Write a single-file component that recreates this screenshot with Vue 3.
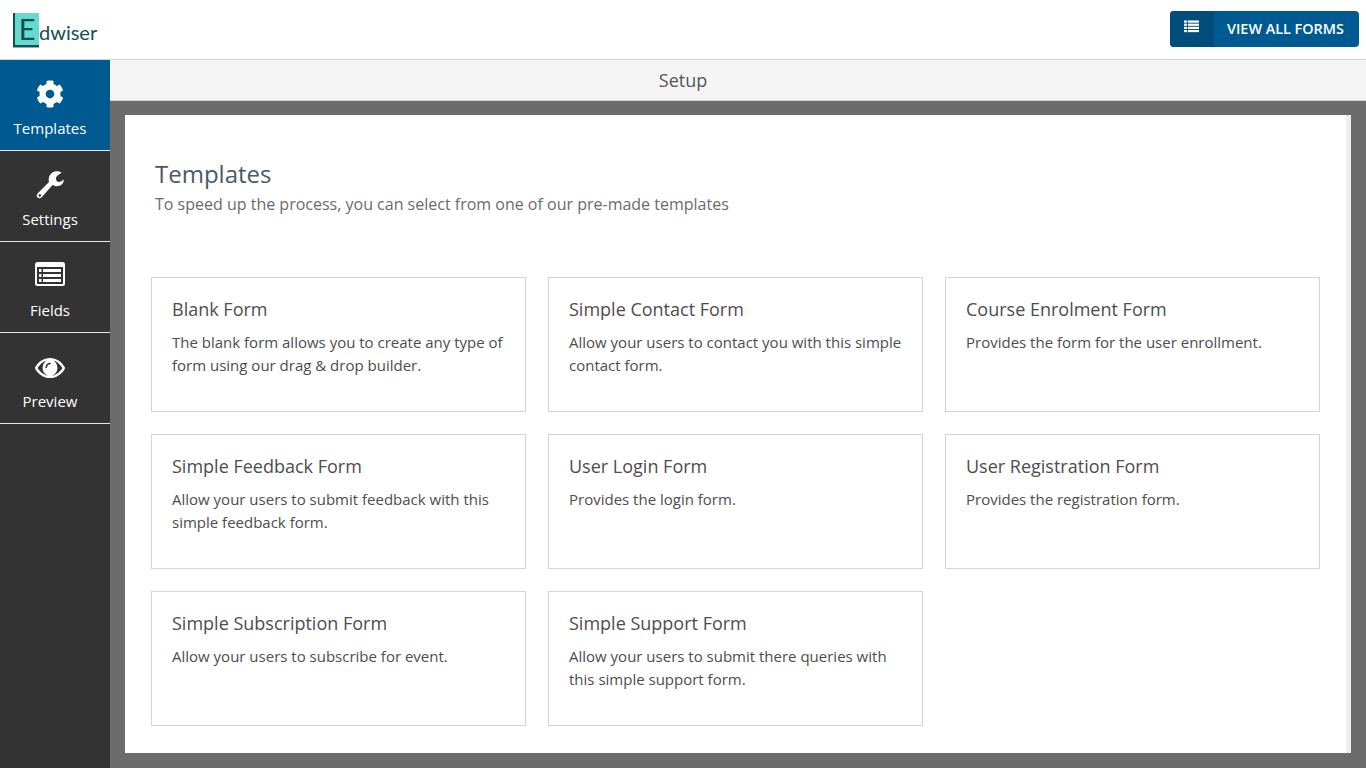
<script setup>
const navItems = [
  { label: 'Templates', icon: 'gear', active: true },
  { label: 'Settings', icon: 'wrench' },
  { label: 'Fields', icon: 'fields' },
  { label: 'Preview', icon: 'eye' },
]

const templates = [
  { title: 'Blank Form', text: 'The blank form allows you to create any type of form using our drag & drop builder.' },
  { title: 'Simple Contact Form', text: 'Allow your users to contact you with this simple contact form.' },
  { title: 'Course Enrolment Form', text: 'Provides the form for the user enrollment.' },
  { title: 'Simple Feedback Form', text: 'Allow your users to submit feedback with this simple feedback form.' },
  { title: 'User Login Form', text: 'Provides the login form.' },
  { title: 'User Registration Form', text: 'Provides the registration form.' },
  { title: 'Simple Subscription Form', text: 'Allow your users to subscribe for event.' },
  { title: 'Simple Support Form', text: 'Allow your users to submit there queries with this simple support form.' },
]
</script>

<template>
  <div class="page">
    <header class="topbar">
      <div class="logo">
        <span class="logo-book"><span class="logo-e">E</span></span>
        <span class="logo-text">dwiser</span>
      </div>
      <button class="all-forms">
        <span class="all-forms-icon">
          <svg viewBox="0 0 16 14" width="15" height="13" fill="#fff">
            <rect x="0" y="0.5" width="3" height="2.4" />
            <rect x="4" y="0.5" width="12" height="2.4" />
            <rect x="0" y="3.9" width="3" height="2.4" />
            <rect x="4" y="3.9" width="12" height="2.4" />
            <rect x="0" y="7.3" width="3" height="2.4" />
            <rect x="4" y="7.3" width="12" height="2.4" />
            <rect x="0" y="10.7" width="3" height="2.4" />
            <rect x="4" y="10.7" width="12" height="2.4" />
          </svg>
        </span>
        <span class="all-forms-label">VIEW ALL FORMS</span>
      </button>
    </header>

    <div class="body">
      <nav class="sidebar">
        <a v-for="item in navItems" :key="item.label" class="nav-item" :class="{ active: item.active }">
          <svg v-if="item.icon === 'gear'" class="nav-icon" viewBox="0 0 512 512" width="28" height="28" fill="#fff">
            <path d="M487.4 315.7l-42.6-24.6c4.3-23.2 4.3-47 0-70.2l42.6-24.6c4.9-2.8 7.1-8.6 5.5-14-11.1-35.6-30-67.8-54.7-94.6-3.8-4.1-10-5.1-14.8-2.3L380.8 110c-17.9-15.4-38.5-27.3-60.8-35.1V25.8c0-5.6-3.9-10.5-9.4-11.7-36.7-8.2-74.3-7.8-109.2 0-5.5 1.2-9.4 6.1-9.4 11.7V75c-22.2 7.9-42.8 19.8-60.8 35.1L88.7 85.5c-4.9-2.8-11-1.9-14.8 2.3-24.7 26.7-43.6 58.9-54.7 94.6-1.7 5.4.6 11.2 5.5 14L67.3 221c-4.3 23.2-4.3 47 0 70.2l-42.6 24.6c-4.9 2.8-7.1 8.6-5.5 14 11.1 35.6 30 67.8 54.7 94.6 3.8 4.1 10 5.1 14.8 2.3l42.6-24.6c17.9 15.4 38.5 27.3 60.8 35.1v49.2c0 5.6 3.9 10.5 9.4 11.7 36.7 8.2 74.3 7.8 109.2 0 5.5-1.2 9.4-6.1 9.4-11.7v-49.2c22.2-7.9 42.8-19.8 60.8-35.1l42.6 24.6c4.9 2.8 11 1.9 14.8-2.3 24.7-26.7 43.6-58.9 54.7-94.6 1.5-5.5-.7-11.3-5.6-14.1zM256 336c-44.1 0-80-35.9-80-80s35.9-80 80-80 80 35.9 80 80-35.9 80-80 80z" />
          </svg>
          <svg v-else-if="item.icon === 'wrench'" class="nav-icon" viewBox="0 0 28 28" width="28" height="28">
            <path fill="#fff" fill-rule="evenodd" d="M25.500 1.800L21.500 4.500Q19.500 6 20 8.500Q20.500 11 23 11Q24.500 11 27.800 8.500C28 13 24 15.500 20 15.200L16.500 14L5.500 26.500Q3.500 28 1.500 26.500Q0 24.500 1.500 22.500L13 11C11.500 6 15 .5 20.500 .3C22.500 .2 24 .7 25.500 1.800zM3.800 23.200a1.300 1.300 0 1 0 0 2.600 1.300 1.300 0 0 0 0-2.600z" />
          </svg>
          <svg v-else-if="item.icon === 'fields'" class="nav-icon" viewBox="0 0 30 24" width="30" height="24">
            <rect x="0" y="0" width="30" height="24" rx="2.500" fill="#fff" />
            <rect x="2" y="5" width="26" height="17" fill="#333" />
            <g fill="#fff">
              <rect x="4" y="7" width="2.500" height="3" />
              <rect x="8" y="7" width="18" height="3" />
              <rect x="4" y="12" width="2.500" height="3" />
              <rect x="8" y="12" width="18" height="3" />
              <rect x="4" y="17" width="2.500" height="3" />
              <rect x="8" y="17" width="18" height="3" />
            </g>
          </svg>
          <svg v-else class="nav-icon nav-icon-eye" viewBox="0 0 30 20" width="30" height="20">
            <path fill="#fff" fill-rule="evenodd" d="M15 0C8.800 0 3.400 3.600.3 9.100c-.4.600-.4 1.200 0 1.800C3.400 16.400 8.800 20 15 20s11.600-3.600 14.700-9.100c.4-.6.4-1.200 0-1.800C26.600 3.600 21.200 0 15 0zM2.600 10C4.800 6.400 8 3.700 11.800 2.600 9.200 4 7.600 6.800 7.600 10c0 4.100 3.300 7.800 7.400 7.800s7.400-3.700 7.400-7.800c0-3.200-1.600-6-4.200-7.400 3.800 1.100 7 3.800 9.200 7.400-2.800 4.500-7.200 7.800-12.400 7.800S5.400 14.500 2.600 10z" />
            <circle cx="15" cy="10" r="7" fill="#fff" />
            <path fill="#333" d="M10.500 9.500c0-2.700 2-4.800 4.600-4.800.5 0 .8.300.8.800s-.3.800-.8.800c-1.700 0-3 1.400-3 3.200 0 .5-.3.800-.8.800s-.8-.3-.8-.8z" />
          </svg>
          <span class="nav-label">{{ item.label }}</span>
        </a>
      </nav>

      <main class="main">
        <div class="subbar">Setup</div>
        <div class="content">
          <section class="panel">
            <div class="intro">
              <h2>Templates</h2>
              <p>To speed up the process, you can select from one of our pre-made templates</p>
            </div>
            <div class="grid">
              <div v-for="tpl in templates" :key="tpl.title" class="card">
                <h3>{{ tpl.title }}</h3>
                <p>{{ tpl.text }}</p>
              </div>
            </div>
          </section>
        </div>
      </main>
    </div>
  </div>
</template>

<style>
html, body {
  margin: 0;
  height: 100%;
  overflow: hidden;
}
</style>

<style scoped>
.page {
  width: 1366px;
  height: 768px;
  display: flex;
  flex-direction: column;
  font-family: "Open Sans", sans-serif;
  overflow: hidden;
}

.topbar {
  height: 59px;
  flex: none;
  background: #fff;
  border-bottom: 1px solid #d4d4d4;
  display: flex;
  align-items: flex-start;
  justify-content: space-between;
  padding: 0 7px 0 13px;
}

.logo {
  display: flex;
  align-items: flex-start;
  margin-top: 13px;
}

.logo-book {
  width: 24px;
  height: 32px;
  background: #66d9d0;
  border-left: 2px solid #12504f;
  border-bottom: 2px solid #12504f;
  box-shadow: 0 1px 0 #8fb5b3;
  display: flex;
  align-items: center;
  justify-content: center;
}

.logo-e {
  font-family: Lato, sans-serif;
  font-size: 29px;
  line-height: 32px;
  color: #12504f;
}

.logo-text {
  font-family: Lato, sans-serif;
  font-size: 20px;
  line-height: 26px;
  color: #12504f;
  margin-top: 6px;
}

.all-forms {
  margin-top: 11px;
  width: 189px;
  height: 36px;
  padding: 0;
  border: none;
  border-radius: 4px;
  overflow: hidden;
  background: #005a92;
  display: flex;
  font-family: inherit;
}

.all-forms-icon {
  width: 44px;
  height: 100%;
  background: #004c7a;
  display: flex;
  justify-content: center;
  padding-top: 9px;
  box-sizing: border-box;
  padding-right: 2px;
}

.all-forms-label {
  flex: 1;
  line-height: 36px;
  text-align: left;
  padding-left: 13px;
  color: #fff;
  font-size: 14.4px;
  font-weight: 600;
}

.body {
  flex: 1;
  display: flex;
  min-height: 0;
}

.sidebar {
  width: 110px;
  flex: none;
  background: #333;
}

.nav-item {
  height: 90px;
  border-bottom: 1px solid #e6e6e6;
  box-sizing: content-box;
  padding-right: 10px;
  width: 100px;
  display: flex;
  flex-direction: column;
  align-items: center;
  color: #fff;
  position: relative;
}

.nav-item.active {
  background: #005a92;
}

.nav-icon {
  position: absolute;
  top: 20px;
}

.nav-icon-eye {
  top: 25px;
}

.nav-label {
  margin-top: 57px;
  font-size: 15px;
  line-height: 22px;
}

.main {
  flex: 1;
  display: flex;
  flex-direction: column;
  background: #6b6b6b;
  min-width: 0;
}

.subbar {
  height: 41px;
  flex: none;
  box-sizing: border-box;
  background: #f5f5f5;
  border-bottom: 1px solid #d4d4d4;
  padding-right: 110px;
  text-align: center;
  line-height: 40px;
  font-size: 18px;
  color: #555;
}

.content {
  flex: 1;
  padding: 14px 15px 15px 15px;
  min-height: 0;
}

.panel {
  width: 1226px;
  height: 638px;
  box-sizing: border-box;
  background: #fff;
  border-right: 5px solid #eee;
  padding: 0 26px;
  overflow: hidden;
}

.intro {
  padding: 44px 4px 0;
  height: 162px;
  box-sizing: border-box;
}

.intro h2 {
  margin: 0;
  font-size: 24px;
  line-height: 30px;
  font-weight: 400;
  color: #4a5a64;
}

.intro p {
  margin: 1px 0 0;
  font-size: 16px;
  line-height: 29px;
  color: #6b6b6b;
}

.grid {
  display: grid;
  grid-template-columns: repeat(3, 375px);
  grid-auto-rows: 135px;
  gap: 22px;
}

.card {
  border: 1px solid #d4d4d4;
  box-sizing: border-box;
  padding: 19px 20px;
}

.card h3 {
  margin: 0;
  font-size: 18px;
  line-height: 24px;
  font-weight: 400;
  color: #4d4d4d;
}

.card p {
  margin: 10px 0 0;
  font-size: 15px;
  line-height: 23px;
  color: #4d4d4d;
}
</style>
